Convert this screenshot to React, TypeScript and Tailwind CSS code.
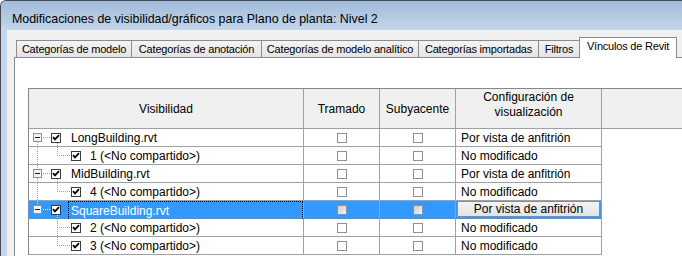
import React from 'react';

type Row = {
  kind: 'parent' | 'child';
  label: string;
  config: string;
  first?: boolean;
  hasNext?: boolean;
  parentHasNext?: boolean;
  last?: boolean;
  selected?: boolean;
};

const rows: Row[] = [
  { kind: 'parent', label: 'LongBuilding.rvt', config: 'Por vista de anfitrión', first: true, hasNext: true },
  { kind: 'child', label: '1 (<No compartido>)', config: 'No modificado', parentHasNext: true, last: true },
  { kind: 'parent', label: 'MidBuilding.rvt', config: 'Por vista de anfitrión', hasNext: true },
  { kind: 'child', label: '4 (<No compartido>)', config: 'No modificado', parentHasNext: true, last: true },
  { kind: 'parent', label: 'SquareBuilding.rvt', config: 'Por vista de anfitrión', hasNext: false, selected: true },
  { kind: 'child', label: '2 (<No compartido>)', config: 'No modificado', parentHasNext: false, last: false },
  { kind: 'child', label: '3 (<No compartido>)', config: 'No modificado', parentHasNext: false, last: true },
];

const tabs = [
  { label: 'Categorías de modelo', w: 'w-[116px]' },
  { label: 'Categorías de anotación', w: 'w-[131px]' },
  { label: 'Categorías de modelo analítico', w: 'w-[158px]' },
  { label: 'Categorías importadas', w: 'w-[121px]' },
  { label: 'Filtros', w: 'w-[42px]' },
];

function TreeLines({ row }: { row: Row }) {
  const c = row.selected ? '#e8eef7' : '#a0a0a0';
  const d = '1 1';
  return (
    <svg width="42" height="17" viewBox="0 0 42 17" className="absolute left-0 top-0">
      {row.kind === 'parent' ? (
        <>
          {!row.first && <line x1="8.5" y1="0" x2="8.5" y2="4" stroke={c} strokeDasharray={d} />}
          {row.hasNext && <line x1="8.5" y1="13" x2="8.5" y2="17" stroke={c} strokeDasharray={d} />}
          <line x1="14" y1="8.5" x2="22" y2="8.5" stroke={c} strokeDasharray={d} />
          <line x1="28.5" y1="14" x2="28.5" y2="17" stroke={c} strokeDasharray={d} />
          <rect x="4.5" y="4.5" width="8" height="8" fill="#f3f3f3" stroke="#919191" />
          <line x1="6" y1="8.5" x2="11" y2="8.5" stroke="#1a1a1a" />
        </>
      ) : (
        <>
          {row.parentHasNext && <line x1="8.5" y1="0" x2="8.5" y2="17" stroke={c} strokeDasharray={d} />}
          <line x1="28.5" y1="0" x2="28.5" y2={row.last ? 9 : 17} stroke={c} strokeDasharray={d} />
          <line x1="30" y1="8.5" x2="42" y2="8.5" stroke={c} strokeDasharray={d} />
        </>
      )}
    </svg>
  );
}

function Check({ checked, variant }: { checked?: boolean; variant: 'tree' | 'plain' | 'disabled' }) {
  const stroke = variant === 'tree' ? '#3c3c3c' : '#8e8f8f';
  return (
    <svg width="10" height="10" viewBox="0 0 10 10" className="block shrink-0">
      {variant === 'disabled' && (
        <defs>
          <linearGradient id="dis" x1="0" y1="0" x2="1" y2="1">
            <stop offset="0" stopColor="#c9c9c9" />
            <stop offset="1" stopColor="#f7f7f7" />
          </linearGradient>
        </defs>
      )}
      <rect
        x="0.5"
        y="0.5"
        width="9"
        height="9"
        fill={variant === 'disabled' ? 'url(#dis)' : '#ffffff'}
        stroke={stroke}
      />
      {checked && <path d="M2 4.2 L4 6.4 L8 2.2" fill="none" stroke="#000" strokeWidth="1.8" />}
    </svg>
  );
}

export default function App() {
  return (
    <div className="w-[682px] h-[256px] overflow-hidden bg-[#c4d7ec] border-l border-t border-[#4a4a4a] rounded-tl-[6px] flex flex-col font-['Liberation_Sans',Arial,sans-serif] text-black">
      <div className="h-[29px] shrink-0 bg-gradient-to-b from-[#9fbad9] to-[#c4d7ec] pl-[11px] pt-[11px] text-[12.4px] leading-[14px] whitespace-nowrap">
        Modificaciones de visibilidad/gráficos para Plano de planta: Nivel 2
      </div>
      <div className="flex-1 min-h-0 ml-[6px] border-l border-t border-[#eef3f9] bg-[#f0f0f0] flex flex-col pl-[6px] pt-[6px]">
        <div className="h-[20px] shrink-0 flex items-end pl-[2px]">
          {tabs.map((t, i) => (
            <div
              key={t.label}
              className={`${t.w} ${i > 0 ? '-ml-px' : ''} h-[17px] shrink-0 border border-b-0 border-[#898c95] bg-gradient-to-b from-[#f4f4f4] to-[#e4e4e4] flex items-center justify-center text-[11px] tracking-[-0.2px] leading-[13px] whitespace-nowrap`}
            >
              {t.label}
            </div>
          ))}
          <div className="w-[98px] -ml-px h-[21px] -mb-px relative z-10 shrink-0 border border-b-0 border-[#898c95] bg-white flex justify-center pt-[2px] text-[11px] tracking-[-0.2px] leading-[13px] whitespace-nowrap">
            Vínculos de Revit
          </div>
        </div>
        <div className="flex-1 min-h-0 bg-white border-l border-t border-[#898c95] pl-[13px] pt-[30px]">
          <div className="border-l border-t border-[#828790] text-[12px] leading-[14px]">
            <div className="grid grid-cols-[275px_76px_76px_146px_1fr] h-[40px]">
              <div className="border-r border-b border-[#a0a0a0] bg-[#f0f0f0] flex items-center justify-center">Visibilidad</div>
              <div className="border-r border-b border-[#a0a0a0] bg-[#f0f0f0] flex items-center justify-center">Tramado</div>
              <div className="border-r border-b border-[#a0a0a0] bg-[#f0f0f0] flex items-center justify-center">Subyacente</div>
              <div className="border-r border-b border-[#a0a0a0] bg-[#f0f0f0] flex flex-col items-center pt-[1px] leading-[15px]">
                <span>Configuración de</span>
                <span>visualización</span>
              </div>
              <div className="border-b border-[#a0a0a0] bg-[#f0f0f0]" />
            </div>
            {rows.map((r) => {
              const bg = r.selected ? 'bg-[#3399ff]' : 'bg-white';
              return (
                <div key={r.label} className="grid grid-cols-[275px_76px_76px_146px] w-[573px] h-[18px]">
                  <div className={`relative border-r border-b border-[#a0a0a0] ${bg} flex items-stretch ${r.kind === 'parent' ? 'pl-[22px]' : 'pl-[42px]'}`}>
                    <TreeLines row={r} />
                    <div className="flex items-center relative">
                      <Check checked variant="tree" />
                    </div>
                    <div
                      className={`flex-1 flex items-center pl-[2px] pt-[1px] whitespace-nowrap border-l ${r.kind === 'parent' ? 'ml-[7px]' : 'ml-[6px]'} ${
                        r.selected ? 'border-t border-r border-dotted border-black text-white' : 'border-transparent'
                      }`}
                    >
                      {r.label}
                    </div>
                  </div>
                  <div className={`border-r border-b border-[#a0a0a0] ${bg} flex items-center justify-center`}>
                    <Check variant={r.selected ? 'disabled' : 'plain'} />
                  </div>
                  <div className={`border-r border-b border-[#a0a0a0] ${bg} flex items-center justify-center`}>
                    <Check variant={r.selected ? 'disabled' : 'plain'} />
                  </div>
                  <div className={`border-r border-b border-[#a0a0a0] ${bg} flex`}>
                    {r.selected ? (
                      <div className="flex-1 mx-[1px] mb-[2px] border border-[#8c8c8c] bg-gradient-to-b from-[#f4f4f4] to-[#e3e3e3] flex items-center justify-center whitespace-nowrap">
                        {r.config}
                      </div>
                    ) : (
                      <div className="flex-1 flex items-center pl-[5px] pt-[1px] whitespace-nowrap">{r.config}</div>
                    )}
                  </div>
                </div>
              );
            })}
          </div>
        </div>
      </div>
    </div>
  );
}
